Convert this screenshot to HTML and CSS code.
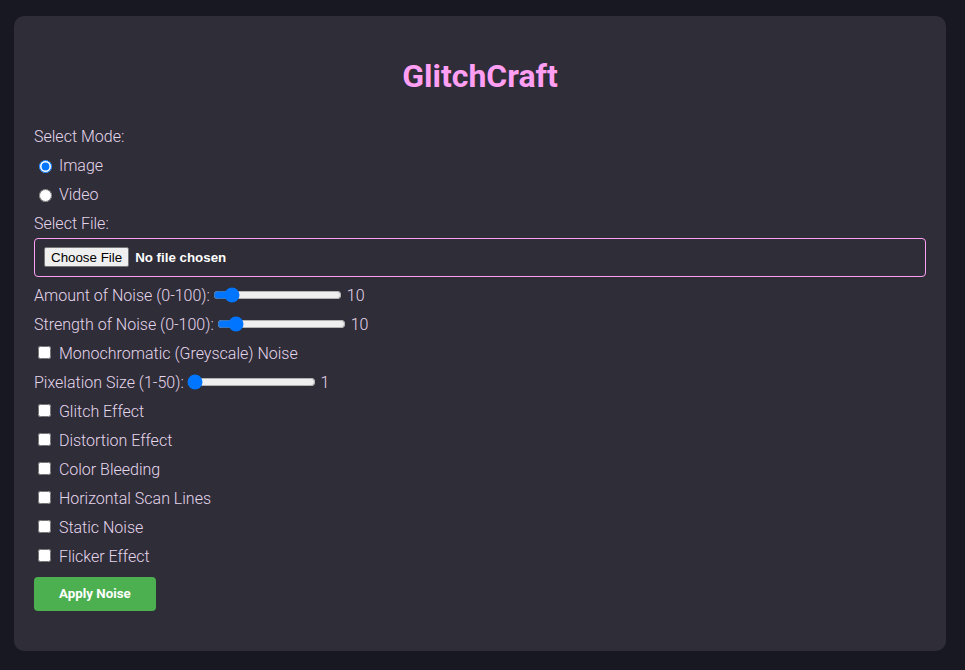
FILE: index.html
```html
<!DOCTYPE html>
<html lang="en">
<head>
<meta charset="utf-8">
<title>GlitchCraft</title>
<link rel="stylesheet" href="styles.css">
</head>
<body>
<div class="app">
  <h1 class="title">GlitchCraft</h1>
  <form class="form">
    <div class="row">Select Mode:</div>
    <label class="row opt"><input type="radio" name="mode" checked> Image</label>
    <label class="row opt"><input type="radio" name="mode"> Video</label>
    <div class="file-group">
      <label class="row" for="file">Select File:</label>
      <input type="file" id="file" class="file">
    </div>
    <label class="row">Amount of Noise (0-100): <input type="range" min="0" max="100" value="10"> <span>10</span></label>
    <label class="row">Strength of Noise (0-100): <input type="range" min="0" max="100" value="10"> <span>10</span></label>
    <label class="row opt"><input type="checkbox"> Monochromatic (Greyscale) Noise</label>
    <label class="row">Pixelation Size (1-50): <input type="range" min="1" max="50" value="1"> <span>1</span></label>
    <label class="row opt"><input type="checkbox"> Glitch Effect</label>
    <label class="row opt"><input type="checkbox"> Distortion Effect</label>
    <label class="row opt"><input type="checkbox"> Color Bleeding</label>
    <label class="row opt"><input type="checkbox"> Horizontal Scan Lines</label>
    <label class="row opt"><input type="checkbox"> Static Noise</label>
    <label class="row opt"><input type="checkbox"> Flicker Effect</label>
    <div class="actions"><button type="button" class="apply">Apply Noise</button></div>
  </form>
</div>
</body>
</html>
```
FILE: styles.css
```css
html, body {
  margin: 0;
  height: 100%;
}
body {
  background: #181822;
  padding: 16px 19px 19px 14px;
  box-sizing: border-box;
  font-family: Roboto, "Liberation Sans", sans-serif;
  font-weight: 300;
  font-size: 16px;
  color: #e6d6ec;
}
.app {
  background: #2e2d38;
  border-radius: 10px;
  padding: 20px;
  height: 100%;
  box-sizing: border-box;
}
.title {
  margin: 22px 0 0;
  font-size: 32px;
  line-height: 37px;
  font-weight: 700;
  text-align: center;
  color: #ff9ff3;
}
.form {
  display: flex;
  flex-direction: column;
  gap: 10px;
  padding-top: 32px;
}
.row {
  display: block;
  line-height: 19px;
  height: 19px;
  white-space: nowrap;
}
.row input[type="range"] {
  vertical-align: middle;
  margin: 0 1px 0 -1px;
  position: relative;
  top: -1px;
}
.row input[type="radio"],
.row input[type="checkbox"] {
  vertical-align: middle;
  position: relative;
  top: -2px;
}
.row input[type="checkbox"] {
  margin-right: 4px;
}
.file-group {
  display: flex;
  flex-direction: column;
  gap: 5px;
  margin-bottom: -1px;
}
.file {
  width: 100%;
  box-sizing: border-box;
  margin: 0;
  padding: 8px;
  border: 1px solid #ff9ff3;
  border-radius: 4px;
  background: transparent;
  color: #ffffff;
  font-family: "Liberation Sans", Arial, sans-serif;
  font-size: 13.333px;
  font-weight: 700;
  line-height: 20px;
}
.file::file-selector-button {
  font-family: "Liberation Sans", Arial, sans-serif;
  font-size: 13.333px;
  font-weight: 400;
  color: #000;
  background: #efefef;
  border: 1px solid #767676;
  border-radius: 2px;
  padding: 1px 6px;
  height: 20px;
  margin: 0 6px 0 1px;
}
.actions {
  padding-top: 1px;
}
.apply {
  background: #4caf50;
  color: #ffffff;
  border: none;
  border-radius: 4px;
  padding: 10px 25px;
  height: 34px;
  font-family: Roboto, "Liberation Sans", sans-serif;
  font-size: 13.333px;
  font-weight: 700;
  line-height: 14px;
  cursor: pointer;
}
```
